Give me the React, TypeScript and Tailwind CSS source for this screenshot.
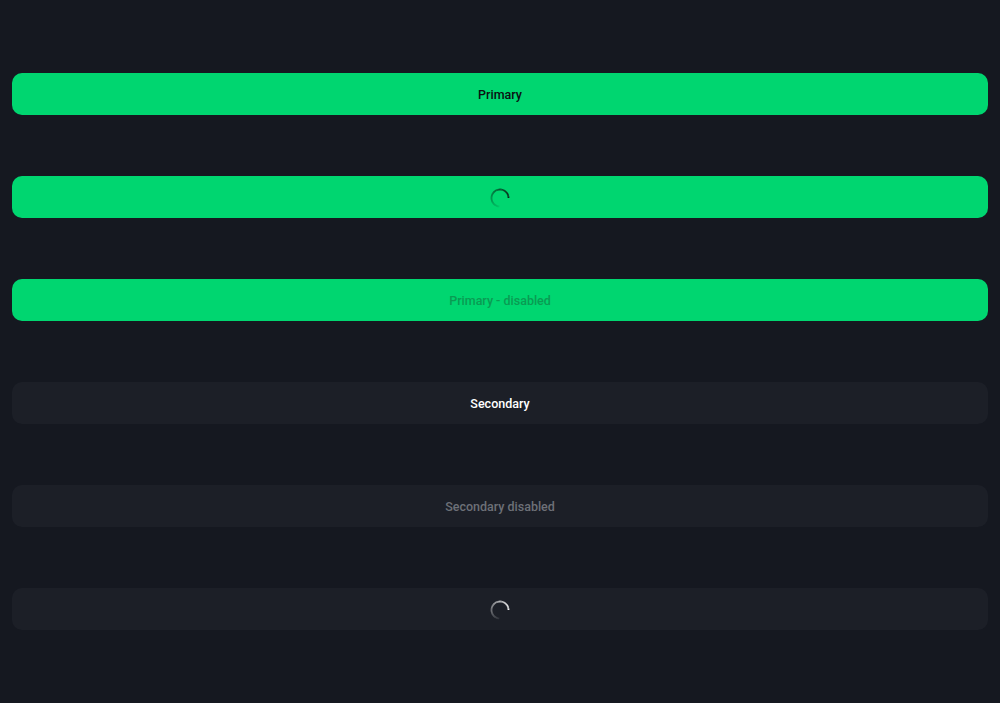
import React from "react";

function Spinner({ color }: { color: string }) {
  // arc of ~270deg, gradient fading from tail to head
  const segs = 30;
  const r = 8.5;
  const start = 95;
  const sweep = 265;
  const els = [];
  for (let i = 0; i < segs; i++) {
    const a0 = ((start + (sweep * i) / segs) * Math.PI) / 180;
    const a1 = ((start + (sweep * (i + 1)) / segs) * Math.PI) / 180;
    const x0 = 11 + r * Math.cos(a0);
    const y0 = 11 + r * Math.sin(a0);
    const x1 = 11 + r * Math.cos(a1);
    const y1 = 11 + r * Math.sin(a1);
    els.push(
      <path
        key={i}
        d={`M${x0} ${y0} A${r} ${r} 0 0 1 ${x1} ${y1}`}
        fill="none"
        stroke={color}
        strokeOpacity={0.1 + (0.9 * i) / segs}
        strokeWidth="1.8"
      />
    );
  }
  return (
    <svg width="22" height="22" viewBox="0 0 22 22" className="mt-[1px]">
      {els}
    </svg>
  );
}

export default function App() {
  const font = { fontFamily: "Roboto, 'Noto Sans', sans-serif" };
  return (
    <div className="min-h-[703px] w-full bg-[#151820] px-3 pt-[73px]" style={font}>
      <div className="flex flex-col gap-[61px]">
        <button className="flex h-[42px] w-full items-center justify-center rounded-[10px] bg-[#00d670] pt-[2px] text-[12.5px] font-medium text-[#0b0f12]">
          Primary
        </button>
        <button className="flex h-[42px] w-full items-center justify-center rounded-[10px] bg-[#00d670]">
          <Spinner color="#0b1a12" />
        </button>
        <button className="flex h-[42px] w-full items-center justify-center rounded-[10px] bg-[#00d670] pt-[2px] text-[12.5px] font-medium text-[#0a9b53]">
          Primary - disabled
        </button>
        <button className="flex h-[42px] w-full items-center justify-center rounded-[10px] bg-[#1c1f27] pt-[2px] text-[12.5px] font-medium text-white">
          Secondary
        </button>
        <button className="flex h-[42px] w-full items-center justify-center rounded-[10px] bg-[#1c1f27] pt-[2px] text-[12.5px] font-medium text-[#6d7077]">
          Secondary disabled
        </button>
        <button className="flex h-[42px] w-full items-center justify-center rounded-[10px] bg-[#1c1f27]">
          <Spinner color="#ffffff" />
        </button>
      </div>
    </div>
  );
}
